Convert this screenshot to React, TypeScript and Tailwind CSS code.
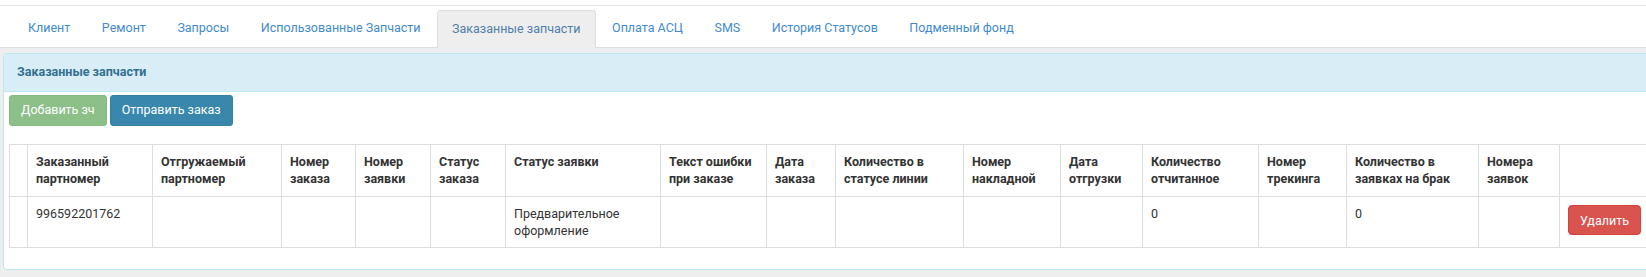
import React from "react";

const tabs = [
  "Клиент",
  "Ремонт",
  "Запросы",
  "Использованные Запчасти",
  "Заказанные запчасти",
  "Оплата АСЦ",
  "SMS",
  "История Статусов",
  "Подменный фонд",
];

const cols: { w: number; h: string[] }[] = [
  { w: 18, h: [] },
  { w: 125, h: ["Заказанный", "партномер"] },
  { w: 129, h: ["Отгружаемый", "партномер"] },
  { w: 74, h: ["Номер", "заказа"] },
  { w: 75, h: ["Номер", "заявки"] },
  { w: 75, h: ["Статус", "заказа"] },
  { w: 155, h: ["Статус заявки"] },
  { w: 106, h: ["Текст ошибки", "при заказе"] },
  { w: 69, h: ["Дата", "заказа"] },
  { w: 128, h: ["Количество в", "статусе линии"] },
  { w: 97, h: ["Номер", "накладной"] },
  { w: 82, h: ["Дата", "отгрузки"] },
  { w: 116, h: ["Количество", "отчитанное"] },
  { w: 88, h: ["Номер", "трекинга"] },
  { w: 132, h: ["Количество в", "заявках на брак"] },
  { w: 81, h: ["Номера", "заявок"] },
  { w: 90, h: [] },
];

const row: React.ReactNode[] = [
  "",
  "996592201762",
  "",
  "",
  "",
  "",
  <>
    Предварительное
    <br />
    оформление
  </>,
  "",
  "",
  "",
  "",
  "",
  "0",
  "",
  "0",
  "",
  null,
];

export default function App() {
  return (
    <div className="w-full h-[277px] overflow-hidden bg-white font-['Roboto',sans-serif] text-[12.5px] text-[#333]">
      <div className="w-[1680px]">
        <div className="h-[5px]" />
        <div className="border-t border-[#e8e8e8] pt-[4px]">
          <ul className="flex pl-[13px] border-b border-[#ddd] h-[38px]">
            {tabs.map((t, i) => {
              const active = i === 4;
              return (
                <li key={t} className="mr-[1.5px] -mb-px">
                  <span
                    className={
                      active
                        ? "block h-[38px] px-[14px] leading-[36px] bg-[#eee] border border-[#ddd] border-b-transparent rounded-t-[4px] text-[#4e7ea8]"
                        : "block h-[38px] px-[15px] leading-[36px] text-[#428bca]"
                    }
                  >
                    {t}
                  </span>
                </li>
              );
            })}
          </ul>
        </div>
        <div className="bg-[#eee] pt-[5px] pl-[3px] pb-[7px]">
          <div className="bg-white border border-[#bce8f1] rounded-[4px]">
            <div className="h-[38px] flex items-center px-[13px] bg-[#d9edf7] border-b border-[#bce8f1] rounded-t-[3px] font-bold text-[#31708f]">
              Заказанные запчасти
            </div>
            <div className="pt-[3px] px-[5px]">
              <div className="flex gap-[3px]">
                <button className="h-[31px] px-[11px] rounded-[3px] bg-[#8dbf89] border border-[#86ba82] text-white">
                  Добавить зч
                </button>
                <button className="h-[31px] px-[11px] rounded-[3px] bg-[#3a87ad] border border-[#3580a5] text-white">
                  Отправить заказ
                </button>
              </div>
              <table className="mt-[18px] mb-[21px] table-fixed border-collapse w-[1640px]">
                <colgroup>
                  {cols.map((c, i) => (
                    <col key={i} style={{ width: c.w }} />
                  ))}
                </colgroup>
                <thead>
                  <tr>
                    {cols.map((c, i) => (
                      <th
                        key={i}
                        className="border border-[#ddd] px-[8px] pt-[8px] pb-[9px] text-left align-top font-bold leading-[17px]"
                      >
                        {c.h.map((l, j) => (
                          <div key={j}>{l}</div>
                        ))}
                        {c.h.length === 1 && <div>&nbsp;</div>}
                      </th>
                    ))}
                  </tr>
                </thead>
                <tbody>
                  <tr>
                    {row.map((v, i) => (
                      <td
                        key={i}
                        className="border border-[#ddd] px-[8px] py-[8px] align-top leading-[17px]"
                      >
                        {i === 16 ? (
                          <button className="h-[30px] px-[11px] rounded-[4px] bg-[#d9534f] border border-[#d43f3a] text-white">
                            Удалить
                          </button>
                        ) : i === 0 || v === "" ? (
                          <>
                            &nbsp;
                            <br />
                            &nbsp;
                          </>
                        ) : (
                          v
                        )}
                      </td>
                    ))}
                  </tr>
                </tbody>
              </table>
            </div>
          </div>
        </div>
      </div>
    </div>
  );
}
